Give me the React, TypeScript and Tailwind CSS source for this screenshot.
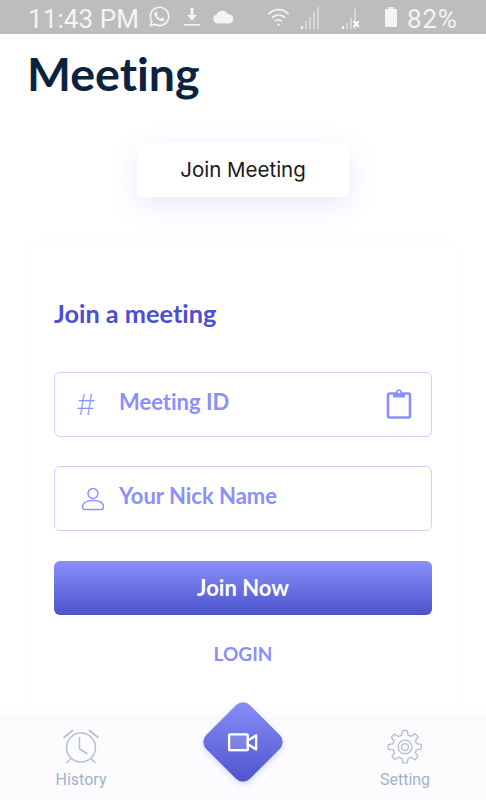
import React from 'react';
import { FaWhatsapp } from 'react-icons/fa';

function StatusBars({ crossed }: { crossed?: boolean }) {
  const heights = crossed ? [4, 9, 15, 28] : [4, 11, 17, 23, 30];
  return (
    <div className="relative flex items-end gap-[2px] h-[24px]">
      {heights.map((h, i) => (
        <div key={i} className={`w-[2px] ${i === 0 ? 'bg-white/80' : 'bg-white/40'}`} style={{ height: h * 0.72 }} />
      ))}
      {crossed && <span className="absolute right-[-4px] bottom-[-2px] text-white text-[14px] leading-none font-bold font-['Roboto',sans-serif]">×</span>}
    </div>
  );
}

function StatusBar() {
  return (
    <div className="h-[34px] bg-[#bdbdbd] flex items-center text-[#f4f4f4] font-['Roboto',sans-serif] text-[26px] shrink-0 pl-[28px]">
      <span className="leading-none mt-[4px] w-[120px] tracking-[0.1px]">11:43 PM</span>
      <FaWhatsapp className="w-[23px] h-[23px] mt-[-2px]" />
      <svg viewBox="0 0 20 22" className="w-[20px] h-[22px] ml-[11px]" fill="#f4f4f4">
        <path d="M8.5 2h3v7h3.5L10 14.5 5 9h3.5z" />
        <rect x="2" y="18" width="16" height="1.6" />
      </svg>
      <svg viewBox="0 0 24 14" className="w-[22px] h-[14px] ml-[10px]" fill="#f4f4f4">
        <path d="M6 14a5 5 0 0 1-1-9.8A7 7 0 0 1 17.6 4 5 5 0 0 1 19 14z" />
      </svg>
      <svg viewBox="0 0 24 20" className="w-[23px] h-[20px] ml-[33px]" fill="none" stroke="#f4f4f4" strokeWidth="1.8">
        <path d="M1.5 7a14 14 0 0 1 21 0" />
        <path d="M5 11a9.5 9.5 0 0 1 14 0" />
        <path d="M8.5 14.5a5 5 0 0 1 7 0" />
        <circle cx="12" cy="18" r="1.2" fill="#f4f4f4" stroke="none" />
      </svg>
      <div className="ml-[11px]"><StatusBars /></div>
      <div className="ml-[23px]"><StatusBars crossed /></div>
      <div className="ml-[29px] relative w-[12px] h-[18px] bg-[#f4f4f4] rounded-[1px] mt-[2px]">
        <div className="absolute left-[3px] top-[-2px] w-[6px] h-[2px] bg-[#f4f4f4]/80" />
      </div>
      <span className="leading-none mt-[4px] ml-[10px] tracking-[0.8px]">82%</span>
    </div>
  );
}

function ClipboardIcon() {
  return (
    <svg viewBox="0 0 26 30" className="w-[26px] h-[30px] mt-[-2px]" fill="none" stroke="#8a90fb" strokeWidth="2.6" strokeLinejoin="round">
      <rect x="2" y="4.5" width="22" height="24" rx="1.5" />
      <path d="M7.5 4.5h11v3.5h-11z" fill="#8a90fb" strokeWidth="1" />
      <circle cx="13" cy="3" r="2" fill="#fff" strokeWidth="1.6" />
    </svg>
  );
}

function UserIcon() {
  return (
    <svg viewBox="0 0 24 24" className="w-[24px] h-[24px]" fill="none" stroke="#8a90fb" strokeWidth="1.4">
      <circle cx="12" cy="6.5" r="5" />
      <path d="M1.5 20c0-4 4-6.500 10.500-6.500S22.500 16 22.500 20c0 1.800-1 2.500-2.500 2.500H4c-1.500 0-2.500-.7-2.500-2.500z" />
    </svg>
  );
}

function ClockIcon() {
  return (
    <svg viewBox="0 0 36 36" className="w-[36px] h-[36px]" fill="none" stroke="#b4c0d2" strokeWidth="1.5" strokeLinecap="round">
      <circle cx="18" cy="18.500" r="14.500" />
      <path d="M16.500 8.500v11.500l7.500 4.500" />
      <path d="M1 8.500L9.500 1.500M26.500 1.500L35 8.500" strokeWidth="1.700" />
      <path d="M7.500 30l-3.500 3.500M28.500 30l3.500 3.500" />
    </svg>
  );
}

function GearIcon() {
  return (
    <svg viewBox="0 0 24 24" className="w-[36px] h-[36px]" fill="none" stroke="#b4c0d2" strokeWidth="0.9" strokeLinejoin="round">
      <path d="M10.500 1h3l.6 3.100 1.900.8 2.600-1.800 2.100 2.100-1.800 2.600.8 1.900 3.100.6v3l-3.100.6-.8 1.900 1.800 2.600-2.100 2.100-2.600-1.800-1.900.8-.6 3.100h-3l-.6-3.100-1.900-.8-2.600 1.800-2.100-2.100 1.800-2.600-.8-1.900L.8 13.500v-3l3.100-.6.8-1.900L2.900 5.400 5 3.300l2.600 1.800 1.900-.8z" />
      <circle cx="12" cy="12" r="4.600" />
      <circle cx="12" cy="12" r="2.300" />
    </svg>
  );
}

function VideoIcon() {
  return (
    <svg viewBox="0 0 32 20" className="w-[30px] h-[19px]" fill="none" stroke="#fff" strokeWidth="2.600" strokeLinejoin="round">
      <rect x="1.500" y="1.500" width="20" height="17" rx="1" fill="#ffffff22" />
      <path d="M30.500 2.500v15l-9-5.500v-4z" />
    </svg>
  );
}

function TextRow({ icon, label, right, iconClass }: { icon: React.ReactNode; label: string; right?: React.ReactNode; iconClass: string }) {
  return (
    <div className="h-[65px] border border-[#cfd1fa] rounded-[6px] flex items-center bg-white">
      <div className={`w-[64px] flex justify-center shrink-0 ${iconClass}`}>{icon}</div>
      <span className="font-['Lato',sans-serif] font-bold text-[22px] text-[#8a90fb] leading-none flex-1 mt-[-5px] [font-variant-ligatures:none]">{label}</span>
      {right && <div className="pr-[19px] flex">{right}</div>}
    </div>
  );
}

export default function App() {
  return (
    <div className="relative w-[486px] h-[800px] overflow-hidden bg-white flex flex-col">
      <StatusBar />

      <h1 className="pl-[27px] pt-[9px] text-[46.5px] leading-[60px] font-bold text-[#0c2340] font-['Lato',sans-serif] [font-variant-ligatures:none]">Meeting</h1>

      <div className="self-center mt-[40px] w-[212px] h-[54px] bg-white rounded-[5px] shadow-[0_8px_28px_rgba(110,120,245,0.16)] flex items-center justify-center font-['Inter',sans-serif] text-[20.5px] text-[#1a1a1a] shrink-0 pt-[1px]">
        Join Meeting
      </div>

      <div className="mx-[28px] mt-[45px] rounded-t-[16px] shadow-[0_-2px_4px_rgba(110,120,245,0.03)] px-[26px] pt-[54px] flex-1 flex flex-col">
        <h2 className="font-['Lato',sans-serif] font-bold text-[25.3px] leading-[34px] pb-[2px] text-[#4a50cf] [font-variant-ligatures:none]">Join a meeting</h2>

        <div className="mt-[40px] flex flex-col gap-[29px]">
          <TextRow
            icon={<span className="font-['Inter',sans-serif] font-extralight text-[29px] leading-none text-[#8a90fb]">#</span>}
            label="Meeting ID"
            iconClass="pr-[2px]"
            right={<ClipboardIcon />}
          />
          <TextRow icon={<UserIcon />} label="Your Nick Name" iconClass="pl-[12px]" />
        </div>

        <button className="mt-[30px] h-[54px] rounded-[6px] bg-gradient-to-b from-[#8a90fb] to-[#4c52c9] text-white font-['Lato',sans-serif] font-bold text-[22px] pb-[2px]">
          Join Now
        </button>

        <div className="mt-[27px] text-center font-['Lato',sans-serif] font-bold text-[19px] leading-[24px] text-[#8a90fb]">LOGIN</div>
      </div>

      <div className="h-[82px] shrink-0 bg-[#fcfcff] border-t border-[#f6f6fd] shadow-[0_-6px_10px_rgba(110,120,245,0.025)] flex justify-between px-[56px] pt-[10px] font-['Roboto',sans-serif] text-[16px] text-[#a2b2cc]">
        <div className="flex flex-col items-center w-[50px]">
          <ClockIcon />
          <span className="mt-[5px] leading-[20px]">History</span>
        </div>
        <div className="flex flex-col items-center w-[50px]">
          <GearIcon />
          <span className="mt-[5px] leading-[20px]">Setting</span>
        </div>
      </div>

      <div className="absolute left-[212px] top-[711px] w-[62px] h-[62px] rotate-45 rounded-[10px] bg-gradient-to-br from-[#8a90fb] to-[#4c52c9] shadow-[2px_2px_6px_rgba(110,120,245,0.25)] flex items-center justify-center">
        <div className="-rotate-45 flex"><VideoIcon /></div>
      </div>
    </div>
  );
}
